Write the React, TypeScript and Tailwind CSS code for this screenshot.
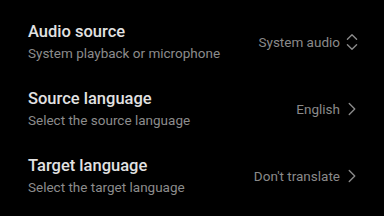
import { ChevronRight, ChevronsUpDown } from 'lucide-react';

type SettingRowProps = {
  title: string;
  subtitle: string;
  value: string;
  kind: 'select' | 'link';
};

const SettingRow = ({ title, subtitle, value, kind }: SettingRowProps) => {
  return (
    <div className="flex h-[67px] items-center justify-between pl-7 pr-[21px]">
      <div className="flex flex-col gap-[3px]">
        <div className="text-[16.5px] font-medium leading-[20px] text-[#e2e2e2]">{title}</div>
        <div className="text-[13.5px] leading-[16px] text-[#8c8c8c]">{subtitle}</div>
      </div>
      <div className="flex items-center gap-[1px] text-[#8a8a8a]">
        <span className="text-[13.5px] leading-[16px]">{value}</span>
        {kind === 'select' ? (
          <ChevronsUpDown size={22} strokeWidth={1.5} />
        ) : (
          <ChevronRight size={22} strokeWidth={1.5} />
        )}
      </div>
    </div>
  );
};

const App = () => {
  return (
    <div className="h-[216px] w-[384px] overflow-hidden bg-black pt-[8px] font-['Roboto',sans-serif]">
      <SettingRow title="Audio source" subtitle="System playback or microphone" value="System audio" kind="select" />
      <SettingRow title="Source language" subtitle="Select the source language" value="English" kind="link" />
      <SettingRow title="Target language" subtitle="Select the target language" value="Don't translate" kind="link" />
    </div>
  );
};

export default App;
